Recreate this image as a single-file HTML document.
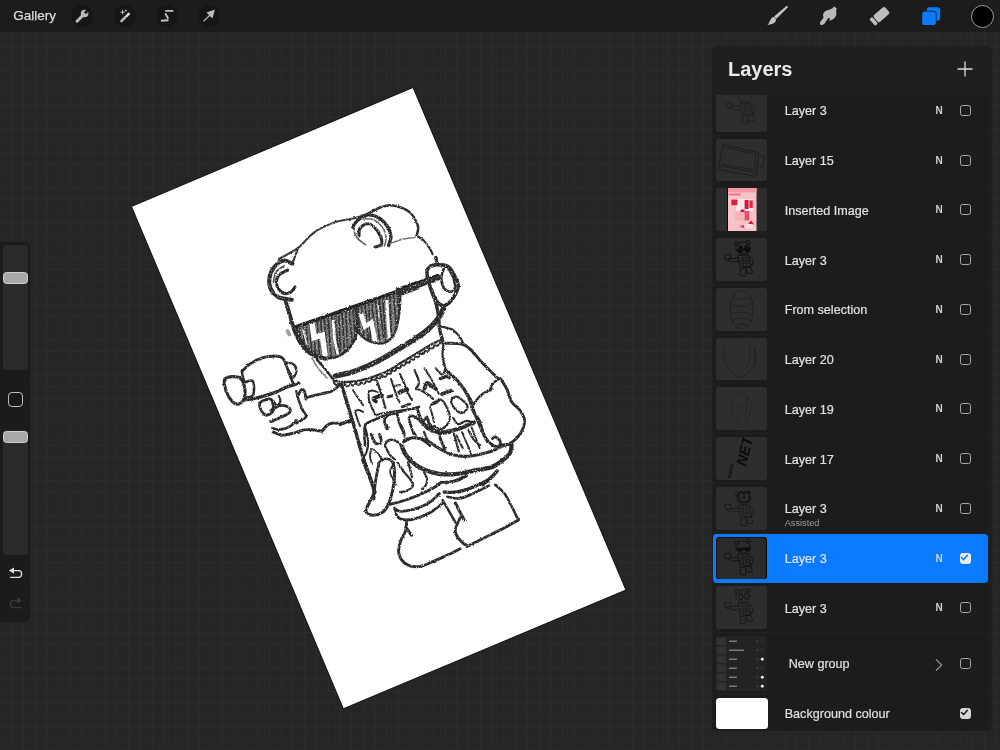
<!DOCTYPE html>
<html><head><meta charset="utf-8"><title>Procreate</title>
<style>
*{box-sizing:border-box;margin:0;padding:0}
html,body{width:1000px;height:750px;overflow:hidden;background:#252525;font-family:"Liberation Sans",sans-serif;}
#stage{will-change:transform;position:absolute;left:0;top:0;width:1000px;height:750px;overflow:hidden;background-color:#252525;
background-image:linear-gradient(to right,#2b2b2b 1px,transparent 1px),linear-gradient(to bottom,#2b2b2b 1px,transparent 1px);
background-size:11.72px 11.72px;background-position:-0.5px -0.5px;}
#art{position:absolute;left:0;top:0;width:1000px;height:750px}
#topbar{position:absolute;left:0;top:0;width:1000px;height:32px;background:#1c1c1c}
#gallery{position:absolute;left:13.3px;top:8px;font-size:13.5px;color:#dadada;-webkit-text-stroke:0.25px #dadada;line-height:16px;letter-spacing:0px}
.tb{position:absolute;top:5.2px;width:22px;height:22px;border-radius:11px;background:#161616}
.ti{position:absolute;top:0;left:0}
#side{position:absolute;left:0;top:242px;width:30px;height:380px;background:#1b1b1b;border-radius:0 5px 5px 0}
.trk{position:absolute;left:3px;width:25px;background:#2a2a2a;border-radius:3px}
.knob{position:absolute;left:2.8px;width:25.2px;height:12.6px;background:#a8a8a8;border:1px solid #cdcdcd;border-radius:3.5px}
#sq{position:absolute;left:8px;top:150.4px;width:15px;height:15px;border:1.8px solid #bdbdbd;border-radius:4px;background:#191919}
#panel{position:absolute;left:712px;top:46px;width:279.5px;height:685px;background:#1f1f1f;border-radius:6px;overflow:hidden}
#ptitle{position:absolute;left:17px;top:13px;font-size:19.5px;font-weight:bold;color:#ebebeb;line-height:22px}
.row{position:absolute;left:0.7px;width:275.6px;height:49.1px;background:#1c1c1c;border-radius:4px}
.row.sel{background:#0a7aff}
.th{position:absolute;left:3px;top:3px;width:51px;height:42.8px;background:#2e2e2e;border-radius:3px;overflow:hidden}
.nm{position:absolute;left:72px;top:17px;font-size:12.6px;line-height:15px;color:#e0e0e0;-webkit-text-stroke:0.2px #e0e0e0;white-space:nowrap}
.sub{position:absolute;left:72px;top:33px;font-size:9.2px;line-height:10px;color:#9a9a9a}
.bm{position:absolute;left:222.7px;top:19px;font-size:10px;font-weight:bold;line-height:11px;color:#d0d0d0}
.cb{position:absolute;left:247px;top:19.05px;width:11px;height:11px;border:1.3px solid #a8a8a8;border-radius:2.5px}
.cb.on{background:#ececec;border-color:#ececec}
</style></head><body>
<div id="stage">
<svg id="art" width="1000" height="750" viewBox="0 0 1000 750">
<defs><filter id="rg" x="-5%" y="-5%" width="110%" height="110%" color-interpolation-filters="sRGB"><feTurbulence type="fractalNoise" baseFrequency="0.45" numOctaves="2" seed="3" result="n"/><feDisplacementMap in="SourceGraphic" in2="n" scale="2.2" xChannelSelector="R" yChannelSelector="G" result="d"/><feTurbulence type="fractalNoise" baseFrequency="0.6" numOctaves="2" seed="11" result="n2"/><feColorMatrix in="n2" type="matrix" values="0 0 0 0 0  0 0 0 0 0  0 0 0 0 0  0 0 0 -3.0 2.72" result="m"/><feComposite in="d" in2="m" operator="in" result="c"/><feGaussianBlur in="c" stdDeviation="0.45"/></filter><clipPath id="lensL"><path d="M296.2 327.6 L355.4 306.8 C357 316 357.5 324 357 330.8 C356 338 353 345 347 350.5 C341 356 333 359 325 358 C314 356 301 345 296.2 327.6 Z"/></clipPath><clipPath id="lensR"><path d="M355.4 306.8 L400.2 290.8 C400.5 298 400.2 304 399.4 310 C399 316 398.4 321 397 326 C395.5 332 393.5 336 390.6 338.8 C387.5 342 384 343.6 379.4 343.6 C374 343.4 369 341.5 365 338.8 C360.5 335.5 357.5 332 355.4 327.6 Z"/></clipPath></defs>
<polygon points="413,87.5 625.9,590 343.4,708.7 131.5,206.5" fill="#fff" stroke="#050505" stroke-width="0.9"/>
<g filter="url(#rg)" fill="none" stroke="#2a2a2a" stroke-linecap="round" stroke-linejoin="round">
<g clip-path="url(#lensL)"><rect x="290" y="300" width="75" height="65" fill="#787878" stroke="none"/><path d="M296.0 330.0 l2.5 37.9" stroke="#303030" stroke-width="1.7"/><path d="M299.6 328.7 l3.5 37.4" stroke="#303030" stroke-width="1.7"/><path d="M303.1 327.3 l3.1 39.2" stroke="#303030" stroke-width="1.7"/><path d="M306.7 326.0 l1.7 40.0" stroke="#303030" stroke-width="1.7"/><path d="M310.2 324.7 l1.6 39.6" stroke="#303030" stroke-width="1.7"/><path d="M313.8 323.3 l1.7 37.5" stroke="#303030" stroke-width="1.7"/><path d="M317.3 322.0 l2.8 42.0" stroke="#303030" stroke-width="1.7"/><path d="M320.9 320.7 l1.9 38.3" stroke="#303030" stroke-width="1.7"/><path d="M324.4 319.3 l3.4 42.7" stroke="#303030" stroke-width="1.7"/><path d="M328.0 318.0 l3.2 39.4" stroke="#303030" stroke-width="1.7"/><path d="M331.6 316.7 l4.4 37.3" stroke="#303030" stroke-width="1.7"/><path d="M335.1 315.3 l4.1 38.7" stroke="#303030" stroke-width="1.7"/><path d="M338.7 314.0 l1.9 37.7" stroke="#303030" stroke-width="1.7"/><path d="M342.2 312.7 l2.4 41.9" stroke="#303030" stroke-width="1.7"/><path d="M345.8 311.3 l2.0 40.5" stroke="#303030" stroke-width="1.7"/><path d="M349.3 310.0 l3.4 39.2" stroke="#303030" stroke-width="1.7"/><path d="M352.9 308.7 l3.1 37.4" stroke="#303030" stroke-width="1.7"/><path d="M356.4 307.3 l1.7 38.2" stroke="#303030" stroke-width="1.7"/><path d="M360.0 306.0 l3.5 39.6" stroke="#303030" stroke-width="1.7"/><path d="M311.8 322 L314 337.6 L322.4 335.2 L325.2 356" stroke="#fff" stroke-width="5.4" stroke-linejoin="miter" stroke-linecap="butt"/><path d="M333 320 L334.6 340.4 L338 355" stroke="#fff" stroke-width="2.6" stroke-linecap="butt"/><path d="M303 330 L307 345" stroke="#e8e8e8" stroke-width="1.4"/></g>
<g clip-path="url(#lensR)"><rect x="350" y="285" width="60" height="65" fill="#787878" stroke="none"/><path d="M358.0 308.0 l2.4 40.5" stroke="#303030" stroke-width="1.7"/><path d="M361.5 306.6 l2.9 38.8" stroke="#303030" stroke-width="1.7"/><path d="M365.1 305.2 l3.9 41.2" stroke="#303030" stroke-width="1.7"/><path d="M368.6 303.8 l2.2 40.4" stroke="#303030" stroke-width="1.7"/><path d="M372.2 302.5 l3.1 42.3" stroke="#303030" stroke-width="1.7"/><path d="M375.7 301.1 l3.7 38.7" stroke="#303030" stroke-width="1.7"/><path d="M379.2 299.7 l4.4 37.7" stroke="#303030" stroke-width="1.7"/><path d="M382.8 298.3 l2.8 41.5" stroke="#303030" stroke-width="1.7"/><path d="M386.3 296.9 l2.0 39.9" stroke="#303030" stroke-width="1.7"/><path d="M389.8 295.5 l1.6 41.0" stroke="#303030" stroke-width="1.7"/><path d="M393.4 294.2 l3.8 40.4" stroke="#303030" stroke-width="1.7"/><path d="M396.9 292.8 l4.1 38.9" stroke="#303030" stroke-width="1.7"/><path d="M400.5 291.4 l3.6 40.6" stroke="#303030" stroke-width="1.7"/><path d="M404.0 290.0 l3.2 39.7" stroke="#303030" stroke-width="1.7"/><path d="M361 314 L365 326.5 L371.4 322.4 L375.5 343" stroke="#fff" stroke-width="4.6" stroke-linejoin="miter" stroke-linecap="butt"/><path d="M386.8 300 L388 322 L389.4 340" stroke="#fff" stroke-width="3.0" stroke-linecap="butt"/><path d="M378 304 L379 318" stroke="#e8e8e8" stroke-width="1.3"/></g>
<path d="M296.2 327.6 C301 345 314 356 325 358 C333 359 341 356 347 350.5 C353 345 356 338 357 330.8 C357.5 324 357 316 355.4 306.8" stroke-width="2.6"/>
<path d="M355.4 327.6 C357.5 332 360.5 335.5 365 338.8 C369 341.5 374 343.4 379.4 343.6 C384 343.6 387.5 342 390.6 338.8 C393.5 336 395.5 332 397 326 C399 318 400.5 302 400.2 290.8" stroke-width="2.4"/>
<path d="M296.2 326.8 L355 306.2 L400 290.4" stroke-width="3.6" stroke="#202020"/>
<path d="M397 292.6 L418 285" stroke-width="8.6" stroke="#303030" stroke-linecap="butt"/>
<path d="M416 285.4 L437.5 277.6" stroke-width="6.4" stroke="#2c2c2c"/>
<path d="M398 289 L438 274.8" stroke-width="1.6" stroke="#1a1a1a"/>
<path d="M279.0 259.0 C282.2 257.1 293.4 251.3 298.2 247.8 C303.0 244.3 304.6 241.1 307.8 238.2 C311.0 235.3 312.9 232.9 317.4 230.2 C321.9 227.5 328.9 224.2 335.0 222.2 C341.1 220.2 348.9 219.5 354.2 218.2 C359.5 216.9 364.9 214.9 367.0 214.2" stroke-width="2.1" opacity="0.95"/>
<path d="M367.0 214.2 C369.4 213.0 377.1 208.5 381.4 207.0 C385.7 205.5 388.9 205.1 392.6 205.4 C396.3 205.7 400.7 207.2 403.8 208.6 C406.9 209.9 409.0 211.4 411.0 213.5 C413.0 215.6 414.8 218.6 416.0 221.0 C417.2 223.4 418.1 225.5 418.2 228.0 C418.3 230.5 416.9 234.5 416.6 235.8" stroke-width="2.5"/>
<path d="M416.6 235.8 C417.7 236.5 420.9 237.8 423.0 239.8 C425.1 241.8 427.8 245.4 429.4 247.8 C431.0 250.2 432.1 253.1 432.6 254.2" stroke-width="2.2"/>
<path d="M391.0 243.2 C393.0 242.5 399.0 240.0 403.0 239.0 C407.0 238.0 413.0 237.7 415.0 237.4" stroke-width="1.4" opacity="0.70"/>
<path d="M435.8 257.5 L436.6 261.0" stroke-width="3.4"/>
<path d="M298.2 247.8 C297.8 249.0 296.4 252.5 295.5 255.0 C294.6 257.5 293.1 261.7 292.6 263.0" stroke-width="2.0"/>
<path d="M292.6 263.8 C291.1 263.3 286.9 260.1 283.8 260.6 C280.7 261.1 276.6 264.1 274.2 267.0 C271.8 269.9 269.9 274.5 269.4 278.2 C268.9 281.9 269.4 286.2 271.0 289.4 C272.6 292.6 275.5 295.7 279.0 297.4 C282.5 299.1 289.7 299.4 291.8 299.8" stroke-width="4.0"/>
<path d="M287.8 270.2 C286.3 271.0 280.9 272.6 279.0 275.0 C277.1 277.4 276.1 281.7 276.6 284.6 C277.1 287.5 279.9 291.3 282.2 292.6 C284.5 293.9 288.1 293.5 290.2 292.6 C292.3 291.7 294.2 287.9 295.0 287.0" stroke-width="3.1"/>
<path d="M284.0 266.0 C282.7 267.0 277.8 269.3 276.0 272.0 C274.2 274.7 273.9 280.3 273.5 282.0" stroke-width="1.9" opacity="0.80"/>
<path d="M285.0 298.8 C285.8 301.5 288.2 309.5 289.8 314.8 C291.4 320.1 292.7 326.0 294.6 330.8 C296.5 335.6 298.1 339.6 301.0 343.6 C303.9 347.6 308.2 352.3 312.2 354.8 C316.2 357.3 322.9 358.1 325.0 358.8" stroke-width="3.9"/>
<path d="M352.6 227.0 C353.4 225.9 355.0 222.6 357.4 220.6 C359.8 218.6 363.5 215.5 367.0 215.0 C370.5 214.5 374.7 215.4 378.2 217.4 C381.7 219.4 385.7 223.8 387.8 227.0 C389.9 230.2 390.9 233.5 391.0 236.6 C391.1 239.7 389.0 243.9 388.6 245.4" stroke-width="3.4"/>
<path d="M359.0 236.0 C359.1 234.8 358.5 230.6 359.8 228.6 C361.1 226.6 364.5 223.9 367.0 223.8 C369.5 223.7 372.7 225.7 375.0 227.8 C377.3 229.9 379.5 233.8 380.6 236.6 C381.7 239.4 382.3 242.9 381.4 244.6 C380.5 246.3 376.1 246.6 375.0 247.0" stroke-width="3.1"/>
<path d="M353.4 223.8 C353.5 225.0 353.3 228.6 354.0 231.0 C354.7 233.4 355.5 235.9 357.4 238.2 C359.3 240.5 364.1 243.5 365.4 244.6" stroke-width="1.7" opacity="0.80"/>
<path d="M363.0 219.0 C364.7 219.1 369.7 218.0 373.0 219.5 C376.3 221.0 380.8 224.9 383.0 228.0 C385.2 231.1 385.8 235.0 386.0 238.0 C386.2 241.0 384.8 244.7 384.5 246.0" stroke-width="1.6" opacity="0.70"/>
<path d="M429.4 267.0 C431.4 265.3 435.8 264.6 439.0 264.6 C442.2 264.6 445.9 265.0 448.6 267.0 C451.3 269.0 453.4 273.4 455.0 276.6 C456.6 279.8 458.5 282.7 458.2 286.2 C457.9 289.7 455.5 294.2 453.4 297.4 C451.3 300.6 447.8 304.3 445.4 305.4 C443.0 306.5 440.9 305.1 439.0 303.8 C437.1 302.5 435.5 299.8 434.2 297.4 C432.9 295.0 432.2 293.1 431.0 289.4 C429.8 285.7 427.3 278.7 427.0 275.0 C426.7 271.3 427.4 268.7 429.4 267.0Z" stroke-width="3.6"/>
<path d="M443.8 268.6 C443.4 270.2 441.4 275.0 441.4 278.2 C441.4 281.4 442.3 285.5 443.8 287.8 C445.3 290.1 448.3 291.8 450.2 291.8 C452.1 291.8 454.5 290.1 455.0 287.8 C455.5 285.5 454.5 281.4 453.4 278.2 C452.3 275.0 449.4 270.2 448.6 268.6" stroke-width="2.6"/>
<path d="M434.2 297.4 C434.6 298.8 435.7 303.1 436.5 306.0 C437.3 308.9 438.6 313.5 439.0 315.0" stroke-width="2.5"/>
<path d="M431.4 289.6 C432.2 292.0 435.0 299.5 436.2 304.0 C437.4 308.5 438.1 312.8 438.6 316.8 C439.1 320.8 438.7 324.0 439.4 328.0 C440.1 332.0 442.1 338.7 442.6 340.8" stroke-width="3.4"/>
<path d="M335.4 376.0 C338.6 375.2 347.7 373.6 354.6 371.2 C361.5 368.8 370.1 365.1 377.0 361.6 C383.9 358.1 390.3 353.9 396.2 350.4 C402.1 346.9 407.4 343.9 412.2 340.8 C417.0 337.7 421.5 334.7 425.0 332.0 C428.5 329.3 430.6 327.0 433.0 324.5 C435.4 322.0 437.7 319.4 439.4 316.8 C441.1 314.2 442.7 310.1 443.4 308.8" stroke-width="5.4"/>
<path d="M317.0 359.6 C318.3 361.2 322.3 365.8 325.0 369.0 C327.7 372.2 331.7 377.2 333.0 378.8" stroke-width="2.6"/>
<path d="M312.0 358.0 C313.0 359.7 315.5 364.7 318.0 368.0 C320.5 371.3 325.5 376.3 327.0 378.0" stroke-width="1.6" opacity="0.60"/>
<path d="M287.5 331.0 L289.5 334.5" stroke-width="4.0" opacity="0.45"/>
<path d="M333.8 382.4 C334.0 382.7 334.5 383.5 334.8 383.9 C335.2 384.3 335.5 384.7 335.9 384.8 C336.3 385.0 336.7 384.9 337.1 384.8 C337.6 384.6 338.0 384.0 338.5 383.8 C338.9 383.7 339.3 383.5 339.7 383.7 C340.1 383.9 340.4 384.8 340.7 385.1 C341.1 385.4 341.5 385.6 341.9 385.6 C342.3 385.6 342.7 385.4 343.1 385.1 C343.6 384.8 344.1 384.0 344.5 383.9 C344.9 383.9 345.2 384.7 345.6 385.0 C345.9 385.4 346.2 385.9 346.7 386.1 C347.1 386.2 347.9 386.1 348.3 385.9 C348.8 385.7 349.0 385.1 349.4 384.8 C349.8 384.5 350.1 383.9 350.5 384.0 C350.9 384.0 351.4 384.9 351.9 385.1 C352.3 385.4 352.7 385.5 353.1 385.5 C353.5 385.5 353.9 385.3 354.3 384.9 C354.6 384.6 354.9 383.7 355.3 383.6 C355.7 383.4 356.1 383.7 356.6 383.9 C357.0 384.1 357.4 384.6 357.9 384.8 C358.3 384.9 358.7 384.9 359.1 384.8 C359.5 384.6 359.8 384.2 360.2 383.8 C360.5 383.4 360.8 382.5 361.2 382.5 C361.7 382.4 362.3 383.2 362.8 383.4 C363.3 383.6 363.8 383.7 364.2 383.6 C364.6 383.6 364.9 383.3 365.2 383.0 C365.5 382.6 365.7 381.8 366.0 381.5 C366.3 381.2 366.7 381.1 367.1 381.1 C367.6 381.2 368.2 381.7 368.6 381.8 C369.1 381.9 369.5 381.9 369.9 381.7 C370.2 381.6 370.5 381.2 370.8 380.7 C371.1 380.3 371.1 379.2 371.5 379.0 C371.9 378.9 372.5 379.6 373.0 379.8 C373.5 380.0 374.0 380.2 374.4 380.2 C374.8 380.2 375.2 380.0 375.5 379.7 C375.8 379.4 376.0 378.7 376.3 378.3 C376.6 378.0 376.9 377.5 377.3 377.5 C377.7 377.5 378.4 378.2 378.8 378.3 C379.3 378.4 379.7 378.5 380.1 378.3 C380.5 378.2 380.8 377.9 381.1 377.5 C381.4 377.0 381.5 376.1 381.8 375.9 C382.2 375.6 382.7 376.0 383.2 376.2 C383.6 376.3 384.1 376.7 384.6 376.7 C385.1 376.7 385.8 376.5 386.2 376.1 C386.5 375.8 386.6 375.2 386.7 374.7 C386.9 374.3 386.9 373.5 387.3 373.3 C387.7 373.2 388.5 373.8 389.0 373.8 C389.5 373.9 390.0 373.9 390.3 373.7 C390.7 373.6 391.0 373.2 391.2 372.8 C391.4 372.4 391.3 371.5 391.6 371.2 C391.9 370.8 392.3 370.8 392.7 370.8 C393.2 370.7 393.9 371.1 394.3 371.1 C394.8 371.0 395.2 370.9 395.5 370.6 C395.8 370.3 395.9 369.9 396.1 369.4 C396.3 368.8 396.1 367.8 396.4 367.6 C396.8 367.3 397.6 368.0 398.2 368.1 C398.7 368.2 399.2 368.3 399.6 368.2 C400.0 368.0 400.3 367.8 400.5 367.4 C400.7 367.0 400.7 366.2 401.0 365.8 C401.2 365.4 401.5 365.1 401.9 365.0 C402.3 364.9 403.1 365.4 403.5 365.4 C404.0 365.4 404.4 365.3 404.8 365.1 C405.1 364.9 405.3 364.4 405.5 364.0 C405.6 363.5 405.5 362.5 405.8 362.2 C406.1 361.9 406.8 362.3 407.3 362.4 C407.8 362.5 408.4 362.6 408.8 362.6 C409.2 362.5 409.6 362.2 409.8 361.9 C410.1 361.5 410.2 360.9 410.4 360.4 C410.6 360.0 410.6 359.4 411.0 359.2 C411.4 359.1 412.2 359.7 412.7 359.7 C413.2 359.8 413.7 359.8 414.0 359.6 C414.4 359.4 414.6 359.0 414.8 358.5 C415.0 358.1 414.9 357.2 415.2 356.9 C415.5 356.5 416.0 356.6 416.5 356.7 C416.9 356.7 417.6 357.0 418.0 356.9 C418.5 356.9 418.8 356.7 419.1 356.4 C419.4 356.1 419.5 355.6 419.7 355.1 C419.9 354.6 419.8 353.6 420.2 353.5 C420.5 353.3 421.4 353.9 421.9 354.0 C422.4 354.1 422.9 354.1 423.3 354.0 C423.6 353.8 423.9 353.5 424.1 353.1 C424.4 352.7 424.3 351.9 424.6 351.5 C424.8 351.1 425.2 350.9 425.6 350.9 C426.1 350.9 426.8 351.3 427.2 351.3 C427.7 351.3 428.1 351.2 428.4 350.9 C428.7 350.6 428.9 350.2 429.1 349.7 C429.2 349.2 429.1 348.1 429.4 347.9 C429.7 347.7 430.5 348.2 431.0 348.3 C431.6 348.4 432.1 348.5 432.5 348.4 C432.9 348.3 433.2 348.0 433.5 347.7 C433.7 347.3 433.7 346.6 433.9 346.2 C434.1 345.8 434.4 345.3 434.8 345.3 C435.2 345.2 435.9 345.8 436.4 345.8 C436.9 345.9 437.3 345.9 437.7 345.7 C438.0 345.5 438.3 345.1 438.5 344.7 C438.7 344.2 438.7 343.3 439.0 343.0 C439.3 342.7 439.9 343.0 440.4 343.1 C440.9 343.2 441.7 343.4 441.9 343.4" stroke-width="2.0"/>
<path d="M333.8 381.0 C336.0 381.2 342.5 382.1 347.0 382.0 C351.5 381.9 354.7 382.0 361.0 380.4 C367.3 378.8 378.3 375.3 385.0 372.4 C391.7 369.5 395.7 366.0 401.0 362.8 C406.3 359.6 411.7 356.4 417.0 353.2 C422.3 350.0 429.0 345.8 433.0 343.6 C437.0 341.4 439.7 340.6 441.0 340.0" stroke-width="2.3"/>
<path d="M441.0 326.4 C442.9 326.9 449.0 327.7 452.2 329.6 C455.4 331.5 458.3 335.2 460.2 337.6 C462.1 340.0 462.9 342.9 463.4 344.0" stroke-width="2.3"/>
<path d="M442.6 343.2 C445.8 343.3 457.0 342.8 461.8 344.0 C466.6 345.2 468.2 347.5 471.4 350.4 C474.6 353.3 477.8 358.1 481.0 361.6 C484.2 365.1 487.7 368.3 490.6 371.2 C493.5 374.1 497.3 377.9 498.6 379.2" stroke-width="2.9"/>
<path d="M443.4 344.0 C443.3 346.1 442.2 352.5 442.6 356.8 C443.0 361.1 445.3 367.5 445.8 369.6" stroke-width="2.3"/>
<path d="M449.0 372.8 C450.9 374.7 457.0 380.3 460.2 384.0 C463.4 387.7 466.1 391.9 468.2 395.2 C470.3 398.5 472.2 402.5 473.0 404.0" stroke-width="2.6"/>
<path d="M498.8 378.6 C497.7 379.5 493.9 382.3 492.4 384.2 C490.9 386.1 490.4 388.9 490.0 389.8" stroke-width="2.3"/>
<path d="M492.4 389.0 C490.8 389.8 485.5 391.9 482.8 393.8 C480.1 395.7 478.1 398.1 476.4 400.2 C474.7 402.3 473.1 405.5 472.4 406.6" stroke-width="2.5"/>
<path d="M500.4 378.6 C501.5 380.3 504.9 385.1 506.8 389.0 C508.7 392.9 509.5 398.3 511.6 401.8 C513.7 405.3 517.5 406.9 519.6 409.8 C521.7 412.7 523.9 416.2 524.4 419.4 C524.9 422.6 524.1 425.8 522.8 429.0 C521.5 432.2 518.8 436.1 516.4 438.6 C514.0 441.1 511.1 443.1 508.4 444.2 C505.7 445.3 501.7 444.9 500.4 445.0" stroke-width="2.9"/>
<path d="M472.4 406.6 C473.1 408.5 474.9 414.1 476.4 417.8 C477.9 421.5 479.6 425.5 481.2 429.0 C482.8 432.5 484.1 435.9 486.0 438.6 C487.9 441.3 490.5 443.7 492.4 445.0 C494.3 446.3 496.4 446.3 497.2 446.6" stroke-width="2.9"/>
<path d="M492.4 438.6 C492.9 438.3 494.3 436.5 495.6 437.0 C496.9 437.5 499.9 440.2 500.4 441.8 C500.9 443.4 499.1 445.8 498.8 446.6" stroke-width="2.8"/>
<path d="M242.0 371.2 C243.3 370.0 246.5 366.3 250.0 364.0 C253.5 361.7 258.5 358.9 262.8 357.6 C267.1 356.3 272.4 356.0 275.6 356.0 C278.8 356.0 280.4 356.5 282.0 357.6 C283.6 358.7 284.0 359.8 285.2 362.4 C286.4 365.0 287.7 369.6 289.0 373.0 C290.3 376.4 292.3 381.3 293.0 383.0" stroke-width="2.8"/>
<path d="M285.2 362.4 C286.5 362.7 291.3 362.7 293.2 364.0 C295.1 365.3 296.4 368.1 296.4 370.4 C296.4 372.7 294.5 377.6 293.2 377.6 C291.9 377.6 289.2 371.6 288.4 370.4" stroke-width="2.3"/>
<path d="M243.6 400.0 C246.0 399.6 252.9 398.8 258.0 397.6 C263.1 396.4 269.2 394.5 274.0 392.8 C278.8 391.1 282.7 388.8 286.8 387.2 C290.9 385.6 296.8 383.9 298.8 383.2" stroke-width="3.4"/>
<path d="M242.0 371.2 C242.1 372.1 242.4 375.1 242.8 376.8 C243.2 378.5 244.1 380.8 244.4 381.6" stroke-width="2.5"/>
<path d="M224.4 380.0 C225.1 377.3 228.1 377.1 230.8 376.8 C233.5 376.5 238.1 376.8 240.4 378.4 C242.7 380.0 243.7 383.2 244.4 386.4 C245.1 389.6 245.3 394.7 244.4 397.6 C243.5 400.5 240.8 403.3 238.8 404.0 C236.8 404.7 234.4 403.5 232.4 401.6 C230.4 399.7 228.1 396.4 226.8 392.8 C225.5 389.2 223.7 382.7 224.4 380.0Z" stroke-width="3.1"/>
<path d="M244.4 382.4 C245.7 382.1 250.8 379.9 252.4 380.8 C254.0 381.7 254.0 385.5 254.0 388.0 C254.0 390.5 253.9 394.4 252.4 396.0 C250.9 397.6 246.4 397.3 245.2 397.6" stroke-width="2.6"/>
<path d="M259.6 404.0 C259.9 402.4 260.9 401.6 262.8 400.8 C264.7 400.0 269.1 398.4 270.8 399.2 C272.5 400.0 272.9 403.5 273.2 405.6 C273.5 407.7 273.6 410.4 272.4 412.0 C271.2 413.6 267.9 415.5 266.0 415.2 C264.1 414.9 262.3 412.3 261.2 410.4 C260.1 408.5 259.3 405.6 259.6 404.0Z" stroke-width="2.8"/>
<path d="M273.2 400.8 C273.9 401.6 276.0 405.6 277.2 405.6 C278.4 405.6 280.1 402.4 280.4 400.8 C280.7 399.2 279.1 396.8 278.8 396.0" stroke-width="2.3"/>
<path d="M270.8 410.4 C272.4 409.6 277.5 406.1 280.4 405.6 C283.3 405.1 286.8 406.1 288.4 407.2 C290.0 408.3 291.1 410.4 290.0 412.0 C288.9 413.6 285.2 415.2 282.0 416.8 C278.8 418.4 272.7 420.8 270.8 421.6" stroke-width="2.8"/>
<path d="M272.4 428.0 C273.7 428.3 277.5 429.9 280.4 429.6 C283.3 429.3 287.3 428.0 290.0 426.4 C292.7 424.8 295.3 421.1 296.4 420.0" stroke-width="2.6"/>
<path d="M273.2 432.0 C274.7 432.5 278.4 435.1 282.0 435.2 C285.6 435.3 290.8 433.7 294.8 432.8 C298.8 431.9 301.5 429.9 306.0 429.6 C310.5 429.3 319.3 430.9 322.0 431.2" stroke-width="2.9"/>
<path d="M296.4 391.2 C296.8 392.8 297.7 397.6 298.8 400.8 C299.9 404.0 301.6 407.7 302.8 410.4 C304.0 413.1 307.1 414.7 306.0 416.8 C304.9 418.9 298.0 422.1 296.4 423.2" stroke-width="2.6"/>
<path d="M298.8 394.4 C299.2 393.6 300.3 390.1 301.2 389.6 C302.1 389.1 303.6 389.6 304.4 391.2 C305.2 392.8 305.7 397.9 306.0 399.2" stroke-width="2.8"/>
<path d="M306.0 397.6 C308.7 396.9 317.7 394.7 322.0 393.6 C326.3 392.5 328.4 392.8 331.6 391.2 C334.8 389.6 339.6 385.2 341.2 384.0" stroke-width="2.9"/>
<path d="M322.0 431.2 C322.8 430.2 325.4 426.8 327.0 425.5 C328.6 424.2 329.2 423.6 331.6 423.2 C334.0 422.8 338.0 423.5 341.2 423.2 C344.4 422.9 349.2 421.9 350.8 421.6" stroke-width="2.9"/>
<path d="M341.2 384.0 C342.0 386.5 344.4 394.0 346.0 399.2 C347.6 404.4 349.2 409.9 350.8 415.2 C352.4 420.5 354.0 425.6 355.6 431.2 C357.2 436.8 358.8 443.5 360.4 448.8 C362.0 454.1 363.4 458.3 365.0 463.0 C366.6 467.7 368.3 472.2 370.0 477.0 C371.7 481.8 374.2 489.5 375.0 492.0" stroke-width="3.4"/>
<path d="M445.2 369.8 C447.3 371.7 454.1 376.5 458.0 381.0 C461.9 385.5 465.9 391.9 468.4 397.0 C470.9 402.1 471.3 407.4 473.2 411.4 C475.1 415.4 478.0 417.5 479.6 421.0 C481.2 424.5 481.5 428.7 482.8 432.2 C484.1 435.7 486.8 440.2 487.6 441.8" stroke-width="2.9"/>
<path d="M419.6 419.4 C421.2 421.0 425.5 426.9 429.2 429.0 C432.9 431.1 437.2 432.2 442.0 432.2 C446.8 432.2 452.7 430.6 458.0 429.0 C463.3 427.4 471.3 423.7 474.0 422.6" stroke-width="4.0"/>
<path d="M365.2 424.2 C368.1 422.9 376.7 418.3 382.8 416.2 C388.9 414.1 395.9 413.0 402.0 411.4 C408.1 409.8 416.7 407.4 419.6 406.6" stroke-width="2.3"/>
<path d="M439.6 435.4 L444.4 449.8" stroke-width="2.2"/>
<path d="M454.0 433.8 L458.8 451.4" stroke-width="2.2"/>
<path d="M462.0 432.2 L471.6 454.6" stroke-width="1.9"/>
<path d="M471.6 427.4 L479.6 448.2" stroke-width="1.9"/>
<path d="M424.0 432.0 L430.0 446.0" stroke-width="2.2"/>
<path d="M403.6 441.8 C405.2 441.1 409.5 438.1 413.2 437.8 C416.9 437.5 421.7 438.5 426.0 440.2 C430.3 441.9 434.5 445.8 438.8 448.2 C443.1 450.6 446.8 453.3 451.6 454.6 C456.4 455.9 461.1 456.7 467.6 456.2 C474.1 455.7 484.5 453.3 490.8 451.4 C497.1 449.5 501.7 446.2 505.2 445.0 C508.7 443.8 510.5 444.3 511.6 444.2" stroke-width="3.1"/>
<path d="M402.0 446.6 C402.8 448.2 403.9 452.7 406.8 456.2 C409.7 459.7 414.3 464.5 419.6 467.4 C424.9 470.3 432.4 472.7 438.8 473.8 C445.2 474.9 452.1 474.3 458.0 473.8 C463.9 473.3 468.5 471.7 474.0 470.6 C479.5 469.5 486.1 469.0 490.8 467.4 C495.5 465.8 498.8 463.4 502.0 461.0 C505.2 458.6 508.4 455.7 510.0 453.0 C511.6 450.3 511.3 446.3 511.6 445.0" stroke-width="4.3"/>
<path d="M497.2 470.6 C496.1 471.9 493.2 476.2 490.8 478.6 C488.4 481.0 484.1 483.9 482.8 485.0" stroke-width="2.8"/>
<path d="M466.8 475.4 C465.0 476.2 459.5 478.7 456.0 480.0 C452.5 481.3 447.7 482.8 446.0 483.4" stroke-width="2.3"/>
<path d="M340.0 425.0 C341.0 424.5 344.2 422.8 346.0 422.0 C347.8 421.2 350.2 420.3 351.0 420.0" stroke-width="2.5"/>
<path d="M353.0 390.0 C353.8 391.3 356.2 395.4 358.0 398.0 C359.8 400.6 362.6 404.2 363.5 405.5" stroke-width="1.9"/>
<path d="M368.5 391.5 C368.6 392.9 368.4 397.2 369.0 400.0 C369.6 402.8 370.9 405.4 372.0 408.0 C373.1 410.6 374.9 414.2 375.5 415.5" stroke-width="2.0"/>
<path d="M368.5 391.5 C369.2 391.3 371.4 390.3 373.0 390.5 C374.6 390.7 377.2 392.2 378.0 392.5" stroke-width="1.9"/>
<path d="M377.0 381.0 C377.7 383.0 379.8 389.3 381.0 393.0 C382.2 396.7 383.2 400.5 384.0 403.0 C384.8 405.5 385.2 407.2 385.5 408.0" stroke-width="2.2"/>
<path d="M373.5 398.5 C374.2 398.2 376.6 397.1 378.0 396.6 C379.4 396.1 381.3 395.7 382.0 395.5" stroke-width="4.0"/>
<path d="M374.0 400.0 L376.0 401.5" stroke-width="3.7"/>
<path d="M388.0 396.8 L391.5 396.0" stroke-width="3.1"/>
<path d="M391.0 379.0 C391.5 380.5 392.9 384.8 394.0 388.0 C395.1 391.2 396.5 395.6 397.5 398.0 C398.5 400.4 399.6 401.8 400.0 402.5" stroke-width="2.0"/>
<path d="M399.5 392.5 C400.1 392.2 401.8 391.3 403.0 390.8 C404.2 390.3 406.3 389.7 407.0 389.5" stroke-width="4.3"/>
<path d="M400.0 374.0 C400.7 375.5 402.5 379.5 404.0 383.0 C405.5 386.5 407.7 392.2 409.0 395.0 C410.3 397.8 411.5 399.2 412.0 400.0" stroke-width="2.0"/>
<path d="M394.0 386.0 L400.0 385.0" stroke-width="1.9"/>
<path d="M414.5 370.0 C415.2 372.0 418.8 378.8 419.0 382.0 C419.2 385.2 416.5 387.8 416.0 389.0" stroke-width="2.2"/>
<path d="M416.0 388.5 C417.2 389.0 420.7 390.2 423.0 391.5 C425.3 392.8 428.3 394.8 430.0 396.0 C431.7 397.2 432.5 398.5 433.0 399.0" stroke-width="2.3"/>
<path d="M424.5 388.5 C424.9 387.6 425.9 383.5 427.0 383.0 C428.1 382.5 429.5 384.5 431.0 385.5 C432.5 386.5 435.2 388.4 436.0 389.0" stroke-width="4.0"/>
<path d="M402.0 407.0 L410.0 404.0" stroke-width="2.5"/>
<path d="M376.0 415.0 C378.3 414.5 385.3 412.8 390.0 412.0 C394.7 411.2 399.3 410.7 404.0 410.0 C408.7 409.3 415.7 408.3 418.0 408.0" stroke-width="2.2"/>
<path d="M365.0 445.0 C364.9 442.5 364.3 433.5 364.5 430.0 C364.7 426.5 364.4 425.7 366.0 424.0 C367.6 422.3 371.3 421.2 374.0 420.0 C376.7 418.8 380.7 417.5 382.0 417.0" stroke-width="2.6"/>
<path d="M355.0 411.0 C355.7 410.8 357.7 409.8 359.0 410.0 C360.3 410.2 362.3 411.7 363.0 412.0" stroke-width="2.0"/>
<path d="M355.0 411.0 C355.3 412.2 356.2 415.5 357.0 418.0 C357.8 420.5 359.5 424.7 360.0 426.0" stroke-width="2.0"/>
<path d="M387.0 429.0 C386.6 427.8 384.7 424.0 384.5 422.0 C384.3 420.0 384.8 418.3 386.0 417.0 C387.2 415.7 390.2 414.5 392.0 414.0 C393.8 413.5 395.8 412.7 397.0 414.0 C398.2 415.3 397.8 418.7 399.0 422.0 C400.2 425.3 403.2 432.0 404.0 434.0" stroke-width="2.6"/>
<path d="M414.0 434.0 C413.5 432.7 411.8 428.7 411.0 426.0 C410.2 423.3 408.7 419.7 409.0 418.0 C409.3 416.3 411.3 415.7 413.0 416.0 C414.7 416.3 418.0 419.3 419.0 420.0" stroke-width="2.6"/>
<path d="M417.0 408.5 C417.5 409.9 419.0 414.9 420.0 417.0 C421.0 419.1 421.8 421.0 423.0 421.0 C424.2 421.0 426.0 416.7 427.0 417.0 C428.0 417.3 427.8 420.8 429.0 423.0 C430.2 425.2 432.2 428.2 434.0 430.0 C435.8 431.8 439.0 433.3 440.0 434.0" stroke-width="3.1"/>
<path d="M430.0 407.0 C430.3 408.2 431.3 411.5 432.0 414.0 C432.7 416.5 433.7 420.7 434.0 422.0" stroke-width="2.0"/>
<path d="M431.0 405.0 C431.8 404.7 434.5 403.8 436.0 403.0 C437.5 402.2 439.3 400.5 440.0 400.0" stroke-width="2.2"/>
<path d="M371.0 434.0 C371.3 435.0 372.2 438.3 373.0 440.0 C373.8 441.7 375.5 443.3 376.0 444.0" stroke-width="2.2"/>
<path d="M379.0 434.0 L381.0 440.0" stroke-width="2.2"/>
<path d="M386.0 442.0 C387.0 441.7 390.0 440.0 392.0 440.0 C394.0 440.0 397.0 441.7 398.0 442.0" stroke-width="2.0"/>
<path d="M404.0 440.0 C405.0 439.7 407.3 438.2 410.0 438.0 C412.7 437.8 417.0 438.0 420.0 439.0 C423.0 440.0 426.7 443.2 428.0 444.0" stroke-width="2.3"/>
<path d="M440.4 378.6 C441.5 378.2 445.3 376.3 446.8 376.2 C448.3 376.1 448.8 377.5 449.2 377.8" stroke-width="3.4"/>
<path d="M442.0 394.1 L451.6 390.6" stroke-width="3.7"/>
<path d="M451.6 399.4 C452.4 397.8 455.3 395.8 458.0 397.0 C460.7 398.2 467.1 403.9 467.6 406.6 C468.1 409.3 463.6 413.0 461.2 413.0 C458.8 413.0 454.8 408.9 453.2 406.6 C451.6 404.3 450.8 401.0 451.6 399.4Z" stroke-width="2.3"/>
<path d="M432.4 403.4 C434.0 402.9 439.1 397.8 442.0 400.2 C444.9 402.6 450.0 413.0 450.0 417.8 C450.0 422.6 444.7 427.7 442.0 429.0 C439.3 430.3 435.3 426.3 434.0 425.8" stroke-width="2.2"/>
<path d="M435.6 368.2 C436.7 369.3 440.4 374.3 442.0 374.6 C443.6 374.9 444.7 370.6 445.2 369.8" stroke-width="2.0"/>
<path d="M453.2 417.8 C454.0 418.9 455.9 423.7 458.0 424.2 C460.1 424.7 463.3 421.3 466.0 421.0 C468.7 420.7 472.7 422.3 474.0 422.6" stroke-width="2.2"/>
<path d="M467.6 429.0 C468.7 430.9 471.9 437.5 474.0 440.2 C476.1 442.9 479.3 444.2 480.4 445.0" stroke-width="2.0"/>
<path d="M456.4 435.4 L462.8 448.2" stroke-width="2.0"/>
<path d="M424.4 368.2 C425.7 370.3 430.0 376.7 432.4 381.0 C434.8 385.3 437.7 391.7 438.8 393.8" stroke-width="1.9"/>
<path d="M365.0 427.0 C365.5 429.2 367.7 436.0 368.0 440.0 C368.3 444.0 367.8 448.0 367.0 451.0 C366.2 454.0 363.7 456.8 363.0 458.0" stroke-width="2.2"/>
<path d="M371.5 435.0 C372.1 436.2 373.8 440.5 375.0 442.0 C376.2 443.5 377.9 444.3 379.0 444.0 C380.1 443.7 381.3 441.5 381.5 440.0 C381.7 438.5 380.2 435.8 380.0 435.0" stroke-width="2.5"/>
<path d="M385.0 446.0 C385.8 447.5 388.3 452.8 390.0 455.0 C391.7 457.2 394.2 458.8 395.0 459.5" stroke-width="2.2"/>
<path d="M385.0 445.0 C385.5 444.2 386.5 441.3 388.0 440.5 C389.5 439.7 392.0 439.4 394.0 440.0 C396.0 440.6 398.7 442.5 400.0 444.0 C401.3 445.5 401.7 448.2 402.0 449.0" stroke-width="2.3"/>
<path d="M371.0 449.0 C370.8 450.3 369.8 454.5 370.0 457.0 C370.2 459.5 371.7 462.8 372.0 464.0" stroke-width="1.9"/>
<path d="M373.0 449.0 C374.0 450.0 377.5 453.2 379.0 455.0 C380.5 456.8 381.5 459.2 382.0 460.0" stroke-width="1.9"/>
<path d="M379.0 463.0 C379.5 462.4 380.5 460.2 382.0 459.5 C383.5 458.8 386.0 458.4 388.0 459.0 C390.0 459.6 393.0 462.3 394.0 463.0" stroke-width="2.5"/>
<path d="M394.0 464.0 C393.3 465.2 390.3 468.8 390.0 471.0 C389.7 473.2 391.0 474.7 392.0 477.0 C393.0 479.3 395.3 483.7 396.0 485.0" stroke-width="1.7"/>
<path d="M398.0 463.0 C399.0 464.5 402.0 469.3 404.0 472.0 C406.0 474.7 408.5 476.7 410.0 479.0 C411.5 481.3 413.7 484.0 413.0 486.0 C412.3 488.0 408.2 490.0 406.0 491.0 C403.8 492.0 401.0 491.8 400.0 492.0" stroke-width="2.2"/>
<path d="M408.0 462.0 C408.3 463.2 409.3 466.5 410.0 469.0 C410.7 471.5 411.7 475.7 412.0 477.0" stroke-width="2.3"/>
<path d="M424.0 472.0 C424.5 473.2 426.7 476.8 427.0 479.0 C427.3 481.2 426.8 483.3 426.0 485.0 C425.2 486.7 422.7 488.3 422.0 489.0" stroke-width="2.2"/>
<path d="M430.0 425.0 C430.8 426.0 433.0 429.7 435.0 431.0 C437.0 432.3 439.5 432.8 442.0 433.0 C444.5 433.2 448.7 432.2 450.0 432.0" stroke-width="3.4"/>
<path d="M440.0 438.0 C440.5 439.2 442.2 443.2 443.0 445.0 C443.8 446.8 444.7 448.3 445.0 449.0" stroke-width="2.9"/>
<path d="M411.0 425.0 C411.3 426.0 412.2 429.3 413.0 431.0 C413.8 432.7 415.5 434.3 416.0 435.0" stroke-width="2.0"/>
<path d="M401.0 425.0 C401.5 426.0 403.4 429.0 404.0 431.0 C404.6 433.0 404.4 436.0 404.5 437.0" stroke-width="2.0"/>
<path d="M387.0 425.0 L388.0 429.0" stroke-width="2.0"/>
<path d="M362.6 460.0 C363.7 462.7 367.1 470.7 369.0 476.0 C370.9 481.3 373.8 487.5 373.8 492.0 C373.8 496.5 370.3 500.0 369.0 503.2 C367.7 506.4 365.3 509.2 365.8 511.2 C366.3 513.2 369.5 514.9 372.2 515.2 C374.9 515.5 379.1 514.5 381.8 512.8 C384.5 511.1 386.3 508.8 388.2 504.8 C390.1 500.8 391.9 494.1 393.0 488.8 C394.1 483.5 394.6 477.1 394.6 472.8 C394.6 468.5 393.3 464.8 393.0 463.2" stroke-width="3.1"/>
<path d="M379.0 463.0 C378.7 464.7 377.7 469.3 377.0 473.0 C376.3 476.7 375.5 480.7 375.0 485.0 C374.5 489.3 374.2 496.7 374.0 499.0" stroke-width="2.8"/>
<path d="M388.2 504.8 C391.1 504.0 400.2 501.9 405.8 500.0 C411.4 498.1 417.0 495.7 421.8 493.6 C426.6 491.5 431.4 489.1 434.6 487.2 C437.8 485.3 439.9 483.2 441.0 482.4" stroke-width="2.9"/>
<path d="M394.6 508.0 C395.4 508.5 396.5 510.9 399.4 511.2 C402.3 511.5 407.4 510.9 412.2 509.6 C417.0 508.3 423.7 505.9 428.2 503.2 C432.7 500.5 437.5 495.2 439.4 493.6" stroke-width="2.8"/>
<path d="M396.2 514.4 C397.0 515.2 398.1 518.4 401.0 519.2 C403.9 520.0 409.0 520.3 413.8 519.2 C418.6 518.1 425.0 515.5 429.8 512.8 C434.6 510.1 440.5 504.8 442.6 503.2" stroke-width="2.8"/>
<path d="M394.6 508.0 L396.2 514.4" stroke-width="2.2"/>
<path d="M441.0 482.4 C443.7 482.1 452.7 481.9 457.0 480.8 C461.3 479.7 465.0 476.8 466.6 476.0" stroke-width="2.6"/>
<path d="M444.2 492.0 C446.3 492.0 452.2 492.8 457.0 492.0 C461.8 491.2 467.7 489.3 473.0 487.2 C478.3 485.1 485.0 481.9 489.0 479.2 C493.0 476.5 495.7 472.5 497.0 471.2" stroke-width="3.4"/>
<path d="M447.4 496.8 C449.5 497.1 455.4 499.2 460.2 498.4 C465.0 497.6 471.4 494.1 476.2 492.0 C481.0 489.9 486.9 486.7 489.0 485.6" stroke-width="2.6"/>
<path d="M406.6 521.6 C406.5 523.1 406.7 527.3 405.8 530.4 C404.9 533.5 402.2 536.5 401.0 540.0 C399.8 543.5 398.6 548.0 398.6 551.2 C398.6 554.4 399.3 556.8 401.0 559.2 C402.7 561.6 405.8 564.4 409.0 565.6 C412.2 566.8 415.9 567.2 420.2 566.4 C424.5 565.6 429.8 562.8 434.6 560.8 C439.4 558.8 444.7 556.4 449.0 554.4 C453.3 552.4 458.3 549.7 460.2 548.8" stroke-width="2.9"/>
<path d="M405.8 527.2 L411.4 535.2" stroke-width="3.1"/>
<path d="M442.6 500.0 L455.4 522.4" stroke-width="2.5"/>
<path d="M455.4 503.2 L464.2 520.0" stroke-width="3.1"/>
<path d="M495.2 484.8 C496.7 486.1 501.5 489.6 504.0 492.8 C506.5 496.0 508.5 500.5 510.4 504.0 C512.3 507.5 513.9 510.9 515.2 513.6 C516.5 516.3 517.9 518.9 518.4 520.0" stroke-width="2.6"/>
<path d="M518.4 520.0 C516.0 521.3 509.1 525.3 504.0 528.0 C498.9 530.7 493.3 533.3 488.0 536.0 C482.7 538.7 475.5 542.4 472.0 544.0 C468.5 545.6 469.3 546.4 467.2 545.6 C465.1 544.8 461.2 541.6 459.2 539.2 C457.2 536.8 455.5 533.9 455.2 531.2 C454.9 528.5 456.7 525.6 457.6 523.2 C458.5 520.8 460.3 517.9 460.8 516.8" stroke-width="2.9"/>
</g></svg>
<div id="topbar">
<div id="gallery">Gallery</div>
<div class="tb" style="left:71.1px"><svg class="ti" width="22" height="22" viewBox="0 0 22 22"><path d="M6 16.2 L11.6 10.6" stroke="#b9b9b9" stroke-width="2.9" stroke-linecap="round" fill="none"/><circle cx="13.6" cy="8.5" r="3.8" fill="#b9b9b9"/><path d="M13.9 8.2 L18.6 3.5" stroke="#161616" stroke-width="2.9" fill="none"/></svg></div>
<div class="tb" style="left:113.6px"><svg class="ti" width="22" height="22" viewBox="0 0 22 22"><path d="M7.4 16.2 L11.6 12" stroke="#b4b4b4" stroke-width="2.5" stroke-linecap="round" fill="none"/><path d="M12.8 10.8 L14.8 8.8" stroke="#dcdcdc" stroke-width="2.5" stroke-linecap="round" fill="none"/><path d="M8.6 5 V9.4 M6.4 7.2 H10.8" stroke="#c0c0c0" stroke-width="1" fill="none"/><path d="M11.8 4.6 V6.6 M10.8 5.6 H12.8" stroke="#c0c0c0" stroke-width="0.9" fill="none"/></svg></div>
<div class="tb" style="left:155.8px"><svg class="ti" width="22" height="22" viewBox="0 0 22 22"><path d="M10 5.9 L16.6 5.9 M9.6 9 L11.9 12.9 M5.8 15.7 L11.7 15.3" stroke="#c4c4c4" stroke-width="1.9" stroke-linecap="round" fill="none"/></svg></div>
<div class="tb" style="left:198.3px"><svg class="ti" width="22" height="22" viewBox="0 0 22 22"><path d="M16.9 4.6 L8.4 7.6 L11.1 10.1 L5 15.9 L5.9 16.8 L11.9 10.9 L14.5 13.6 Z" fill="#bcbcbc"/></svg></div>
<svg style="position:absolute;left:762px;top:2px" width="30" height="28" viewBox="762 2 30 28"><path d="M788.2 6.9 L776.4 18.8 L774 16.6 L786.8 5.7 Z" fill="#c4c4c4"/><path d="M774.6 17.4 C776.8 18.8 776.2 21.8 773.6 23.2 C771.6 24.2 769.2 24.6 767.4 25 C769.2 23.4 769.6 21.6 770.6 19.6 C771.6 17.6 773.2 16.6 774.6 17.4 Z" fill="#c4c4c4"/></svg>
<svg style="position:absolute;left:814px;top:2px" width="30" height="28" viewBox="814 2 30 28"><path d="M820.4 24.6 C819.4 23.4 820 21.8 821.4 20.4 L823.6 17.4 C822.4 14.6 823.4 11.6 826.6 10.4 C828.6 9.6 831 9.4 832.4 8.2 L834.2 6.6 L836.8 8.6 L836 11 C837 13.2 836.4 15.8 834.6 17.8 C833 19.6 830.8 20.8 829 20.6 L830.2 18.4 L828.4 17.8 L824.6 23.6 C823.4 25 821.4 25.6 820.4 24.6 Z" fill="#b9b9b9"/></svg>
<svg style="position:absolute;left:866px;top:2px" width="30" height="28" viewBox="866 2 30 28"><g transform="rotate(-41 879.8 16)"><rect x="874.4" y="11.5" width="15.2" height="9" rx="2" fill="#bdbdbd"/><rect x="869.8" y="11.5" width="3.6" height="9" rx="1.3" fill="#bdbdbd"/></g></svg>
<svg style="position:absolute;left:918px;top:2px" width="28" height="28" viewBox="918 2 28 28"><rect x="926.8" y="7.2" width="13.4" height="13.4" rx="2.6" fill="#0a7aff"/><rect x="921.4" y="10.7" width="15.2" height="15.2" rx="3.2" fill="#1c1c1c"/><rect x="922.2" y="11.5" width="13.6" height="13.6" rx="2.6" fill="#0a7aff"/></svg>
<div style="position:absolute;left:971px;top:4.8px;width:23.2px;height:23.2px;border-radius:50%;background:#000;border:1.3px solid #9c9c9c"></div>

</div>
<div id="side">
<div class="trk" style="top:3px;height:125px"></div>
<div class="knob" style="top:29.5px"></div>
<div id="sq"></div>
<div class="trk" style="top:188px;height:125px"></div>
<div class="knob" style="top:188.6px"></div>
<svg style="position:absolute;left:7px;top:323px" width="18" height="16" viewBox="0 0 18 16"><path d="M6 5.6 H11.6 C15.6 5.6 15.6 12.4 11.6 12.4 H3.6" fill="none" stroke="#dedede" stroke-width="1.4" stroke-linecap="round"/><path d="M1.9 5.6 L7 2.4 L7 8.8 Z" fill="#dedede"/></svg>
<svg style="position:absolute;left:7px;top:353px" width="18" height="16" viewBox="0 0 18 16"><path d="M11 5.6 H6.4 C2.4 5.6 2.4 12.6 6.4 12.6 H14" fill="none" stroke="#3a3a3a" stroke-width="1.4" stroke-linecap="round"/><path d="M15 5.6 L10 2.4 L10 8.8 Z" fill="#3a3a3a"/></svg>

</div>
<div id="panel">


<div class="row" style="top:39.8px"><div class="th" style="top:3px"><svg width="51" height="43" viewBox="0 0 51 43" style="position:absolute;left:0;top:0"><g transform="translate(0.5 -1.5)" fill="none" stroke="#161616" stroke-width="0.8" opacity="0.7" stroke-linecap="round"><ellipse cx="28.5" cy="8.5" rx="7.2" ry="6.2"/><circle cx="22.3" cy="4" r="1.9"/><circle cx="33.6" cy="2.8" r="1.9"/><path d="M23.6 16 L34 15.2 L36.4 27.6 L26.4 29 Z"/><path d="M23.8 18.4 L16 19.6 M16.4 22.4 L24.6 22"/><path d="M10 15.6 L15.6 14.8 L16.4 18.6 L14.2 19 L14.6 21.2 L12.6 21.4 L12.2 19.2 L10.6 19.4 Z"/><path d="M34.4 16.4 C37.6 18 39 21 38.4 24.6 L35.8 25.4"/><path d="M27 25.6 C30 28.8 35 28 38 25.2"/><path d="M26.2 29.4 L25.4 35.6 L31 36.6 L31 30.4"/><path d="M32 29.6 L32.6 34.2 L38 33.4 L36.6 28"/><path d="M25.6 19 L33.8 18.2 M26 21.6 L34.4 20.8 M26.6 24.2 L35 23.4 M28 16 L29.4 28 M31.2 15.6 L32.6 27.6" stroke-width="0.5"/></g><path d="M22 33 L34 31.5" stroke="#161616" stroke-width="0.6" opacity=".6"/></svg></div><div class="nm" style="top:18.16px">Layer 3</div><div class="bm" style="top:19.16px">N</div><div class="cb"></div></div>
<div class="row" style="top:89.6px"><div class="th" style="top:3px"><svg width="51" height="43" viewBox="0 0 51 43" style="position:absolute;left:0;top:0"><g fill="none" stroke="#191919" stroke-width="0.9" opacity=".85"><path d="M7.6 5.4 L43 14 L40.4 33.6 L2.6 26.6 Z"/><path d="M10.6 8.6 L40 15.6 L38 31 L6 25"/><path d="M2.6 26.6 L2 30.4 L40 37.6 L40.4 33.6"/><path d="M43 16 L48.6 18.4 L47 28.4 L42 27"/></g></svg></div><div class="nm" style="top:18.40px">Layer 15</div><div class="bm" style="top:19.40px">N</div><div class="cb"></div></div>
<div class="row" style="top:139.4px"><div class="th" style="top:3px"><svg width="51" height="43" viewBox="0 0 51 43" style="position:absolute;left:0;top:0"><rect x="11" y="-0.5" width="30" height="44" fill="#0a0a0a"/><rect x="12" y="0" width="28.6" height="43" fill="#f7c3c8"/><rect x="12" y="0" width="28.6" height="4.4" fill="#f39aa6"/><rect x="12.6" y="5.6" width="12" height="1.8" fill="#ee6e83"/><rect x="20" y="11" width="17" height="12" fill="#fde8ea"/><rect x="15.4" y="11.6" width="6" height="5.6" fill="#d81e3f"/><rect x="28.6" y="12" width="4" height="9" fill="#d4173b"/><rect x="33.4" y="12.4" width="3.4" height="7.6" fill="#e0284a"/><rect x="24.6" y="21.6" width="4" height="3" fill="#cf1236"/><rect x="28.6" y="23" width="4.6" height="9.4" fill="#e2506a"/><rect x="19" y="24" width="9" height="8.6" fill="#f4b3bb"/><path d="M23 38 L31 36.6 L29 40.8 Z" fill="#e83a55"/><path d="M32 35.4 L35.4 32.4 L38 36.8 Z" fill="#e0102f"/><rect x="28" y="36" width="9" height="4.4" fill="#fbe3e5" opacity=".8"/></svg></div><div class="nm" style="top:18.64px">Inserted Image</div><div class="bm" style="top:18.64px">N</div><div class="cb"></div></div>
<div class="row" style="top:189.1px"><div class="th" style="top:3px"><svg width="51" height="43" viewBox="0 0 51 43" style="position:absolute;left:0;top:0"><g transform="translate(-1.5 1.5)" fill="none" stroke="#0e0e0e" stroke-width="0.9" opacity="0.95" stroke-linecap="round"><ellipse cx="28.5" cy="8.5" rx="7.2" ry="6.2"/><circle cx="22.3" cy="4" r="1.9"/><circle cx="33.6" cy="2.8" r="1.9"/><path d="M21.6 9.6 L36 8.4 L35.8 11.5 C35 13.4 32 13.6 30.6 11.8 L29 10.6 C28.6 13.4 25.6 14.4 23.4 12.6 Z" fill="#0e0e0e" stroke="none"/><path d="M23.6 16 L34 15.2 L36.4 27.6 L26.4 29 Z"/><path d="M23.8 18.4 L16 19.6 M16.4 22.4 L24.6 22"/><path d="M10 15.6 L15.6 14.8 L16.4 18.6 L14.2 19 L14.6 21.2 L12.6 21.4 L12.2 19.2 L10.6 19.4 Z"/><path d="M34.4 16.4 C37.6 18 39 21 38.4 24.6 L35.8 25.4"/><path d="M27 25.6 C30 28.8 35 28 38 25.2"/><path d="M26.2 29.4 L25.4 35.6 L31 36.6 L31 30.4"/><path d="M32 29.6 L32.6 34.2 L38 33.4 L36.6 28"/><path d="M25.6 19 L33.8 18.2 M26 21.6 L34.4 20.8 M26.6 24.2 L35 23.4 M28 16 L29.4 28 M31.2 15.6 L32.6 27.6" stroke-width="0.5"/><ellipse cx="26" cy="8.6" rx="1.7" ry="2.6" fill="#0e0e0e"/><ellipse cx="32" cy="8" rx="1.7" ry="2.6" fill="#0e0e0e"/></g></svg></div><div class="nm" style="top:18.88px">Layer 3</div><div class="bm" style="top:18.88px">N</div><div class="cb"></div></div>
<div class="row" style="top:238.9px"><div class="th" style="top:3px"><svg width="51" height="43" viewBox="0 0 51 43" style="position:absolute;left:0;top:0"><g fill="none" stroke="#1b1b1b" stroke-width="0.8" opacity=".8"><ellipse cx="25.6" cy="21.5" rx="11.6" ry="19.5"/><path d="M17 8.6 C22 12 30 12 34.4 8.4 M14.6 15.4 C20 19.6 31 19.6 36.6 15 M14.2 27 C20 23 31 23 37 27.4 M15.4 33 C21 29.4 30 29.4 36 33.4 M19 38 C23 35.6 28.6 35.6 32.6 38"/></g></svg></div><div class="nm" style="top:18.12px">From selection</div><div class="bm" style="top:19.12px">N</div><div class="cb"></div></div>
<div class="row" style="top:288.6px"><div class="th" style="top:3px"><svg width="51" height="43" viewBox="0 0 51 43" style="position:absolute;left:0;top:0"><g fill="none" stroke="#1d1d1d" stroke-width="0.8" opacity=".7"><path d="M9 8 C5 20 9 33 24 39.6 C36 36 41 24 38 9.6 M32.6 4.6 C36 14 34 26 27 33 M38 9.6 C40 16 40.6 24 38 30"/></g></svg></div><div class="nm" style="top:18.36px">Layer 20</div><div class="bm" style="top:19.36px">N</div><div class="cb"></div></div>
<div class="row" style="top:338.4px"><div class="th" style="top:3px"><svg width="51" height="43" viewBox="0 0 51 43" style="position:absolute;left:0;top:0"><g fill="none" stroke="#1d1d1d" stroke-width="0.8" opacity=".65"><path d="M25 6 C17 12 13.6 19 16.6 26 C19 32 22.6 37 26.6 41 C31 34 35.6 26 35 18 C34 12 30.6 8 25 6 Z M22 20 L28.6 19.6 M30 10 C31.6 16 31 24 29 30"/></g></svg></div><div class="nm" style="top:18.60px">Layer 19</div><div class="bm" style="top:18.60px">N</div><div class="cb"></div></div>
<div class="row" style="top:388.2px"><div class="th" style="top:3px"><svg width="51" height="43" viewBox="0 0 51 43" style="position:absolute;left:0;top:0"><g transform="rotate(-76 27 17)" font-family="Liberation Sans" font-weight="bold" font-style="italic" fill="#0b0b0b"><text x="15" y="23" font-size="15">NET</text></g><g transform="rotate(-80 15 33)" fill="#0d0d0d" font-family="Liberation Sans" font-size="4.6" font-weight="bold"><text x="7" y="34.5">REMIX</text></g></svg></div><div class="nm" style="top:18.84px">Layer 17</div><div class="bm" style="top:18.84px">N</div><div class="cb"></div></div>
<div class="row" style="top:437.9px"><div class="th" style="top:3px"><svg width="51" height="43" viewBox="0 0 51 43" style="position:absolute;left:0;top:0"><g transform="translate(-1 2.5)" fill="none" stroke="#121212" stroke-width="0.8" opacity="0.8" stroke-linecap="round"><ellipse cx="28.5" cy="8.5" rx="7.2" ry="6.2"/><circle cx="22.3" cy="4" r="1.9"/><circle cx="33.6" cy="2.8" r="1.9"/><path d="M23.6 16 L34 15.2 L36.4 27.6 L26.4 29 Z"/><path d="M23.8 18.4 L16 19.6 M16.4 22.4 L24.6 22"/><path d="M10 15.6 L15.6 14.8 L16.4 18.6 L14.2 19 L14.6 21.2 L12.6 21.4 L12.2 19.2 L10.6 19.4 Z"/><path d="M34.4 16.4 C37.6 18 39 21 38.4 24.6 L35.8 25.4"/><path d="M27 25.6 C30 28.8 35 28 38 25.2"/><path d="M26.2 29.4 L25.4 35.6 L31 36.6 L31 30.4"/><path d="M32 29.6 L32.6 34.2 L38 33.4 L36.6 28"/><path d="M25.6 19 L33.8 18.2 M26 21.6 L34.4 20.8 M26.6 24.2 L35 23.4 M28 16 L29.4 28 M31.2 15.6 L32.6 27.6" stroke-width="0.5"/></g><path d="M22.6 8.6 C22 4 27.6 3 28 8.4 L28.2 12.4 M28 8.4 C28 3.4 34 3.4 33.6 8.6 L33.2 13.2 M22.6 8.6 L23 13.6 C26 16 31 15.6 33.2 13.2" fill="none" stroke="#0d0d0d" stroke-width="1.3" opacity=".9"/></svg></div><div class="nm" style="top:18.08px">Layer 3</div><div class="sub" style="top:34.08px">Assisted</div><div class="bm" style="top:19.08px">N</div><div class="cb"></div></div>
<div class="row sel" style="top:487.7px"><div class="th" style="top:3px"><svg width="51" height="43" viewBox="0 0 51 43" style="position:absolute;left:0;top:0"><rect x="0.5" y="0.5" width="50" height="42" rx="3" fill="#2b2b2b" stroke="#120c08" stroke-width="1.2"/><g transform="translate(-1.5 1.5)" fill="none" stroke="#0f0f0f" stroke-width="0.85" opacity="0.9" stroke-linecap="round"><ellipse cx="28.5" cy="8.5" rx="7.2" ry="6.2"/><circle cx="22.3" cy="4" r="1.9"/><circle cx="33.6" cy="2.8" r="1.9"/><path d="M21.6 9.6 L36 8.4 L35.8 11.5 C35 13.4 32 13.6 30.6 11.8 L29 10.6 C28.6 13.4 25.6 14.4 23.4 12.6 Z" fill="#0f0f0f" stroke="none"/><path d="M23.6 16 L34 15.2 L36.4 27.6 L26.4 29 Z"/><path d="M23.8 18.4 L16 19.6 M16.4 22.4 L24.6 22"/><path d="M10 15.6 L15.6 14.8 L16.4 18.6 L14.2 19 L14.6 21.2 L12.6 21.4 L12.2 19.2 L10.6 19.4 Z"/><path d="M34.4 16.4 C37.6 18 39 21 38.4 24.6 L35.8 25.4"/><path d="M27 25.6 C30 28.8 35 28 38 25.2"/><path d="M26.2 29.4 L25.4 35.6 L31 36.6 L31 30.4"/><path d="M32 29.6 L32.6 34.2 L38 33.4 L36.6 28"/><path d="M25.6 19 L33.8 18.2 M26 21.6 L34.4 20.8 M26.6 24.2 L35 23.4 M28 16 L29.4 28 M31.2 15.6 L32.6 27.6" stroke-width="0.5"/></g></svg></div><div class="nm" style="top:18.32px">Layer 3</div><div class="bm" style="top:19.32px">N</div><div class="cb on"><svg width="11" height="11" viewBox="0 0 11 11" style="position:absolute;left:-1.3px;top:-1.3px"><path d="M2.6 5.6 L4.7 7.6 L8.4 3.3" fill="none" stroke="#0a7aff" stroke-width="1.5" stroke-linecap="round" stroke-linejoin="round"/></svg></div></div>
<div class="row" style="top:537.4px"><div class="th" style="top:3px"><svg width="51" height="43" viewBox="0 0 51 43" style="position:absolute;left:0;top:0"><g transform="translate(-1.5 1.5)" fill="none" stroke="#131313" stroke-width="0.85" opacity="0.85" stroke-linecap="round"><ellipse cx="28.5" cy="8.5" rx="7.2" ry="6.2"/><circle cx="22.3" cy="4" r="1.9"/><circle cx="33.6" cy="2.8" r="1.9"/><path d="M23.6 16 L34 15.2 L36.4 27.6 L26.4 29 Z"/><path d="M23.8 18.4 L16 19.6 M16.4 22.4 L24.6 22"/><path d="M10 15.6 L15.6 14.8 L16.4 18.6 L14.2 19 L14.6 21.2 L12.6 21.4 L12.2 19.2 L10.6 19.4 Z"/><path d="M34.4 16.4 C37.6 18 39 21 38.4 24.6 L35.8 25.4"/><path d="M27 25.6 C30 28.8 35 28 38 25.2"/><path d="M26.2 29.4 L25.4 35.6 L31 36.6 L31 30.4"/><path d="M32 29.6 L32.6 34.2 L38 33.4 L36.6 28"/><path d="M25.6 19 L33.8 18.2 M26 21.6 L34.4 20.8 M26.6 24.2 L35 23.4 M28 16 L29.4 28 M31.2 15.6 L32.6 27.6" stroke-width="0.5"/><path d="M24.6 9.6 C24 5 27.6 4.6 28 9 C28.4 13 25 13.6 24.6 9.6 Z M29.6 9 C29.6 4.6 33.4 4.4 33.4 8.6 C33.4 12.6 29.8 13 29.6 9 Z" stroke-width="1.1"/></g></svg></div><div class="nm" style="top:18.56px">Layer 3</div><div class="bm" style="top:18.56px">N</div><div class="cb"></div></div>
<div class="row" style="top:588.0px;height:58.5px"><div class="th" style="top:2px;height:54.7px;width:51.5px"><svg width="51.5" height="54.7" viewBox="0 0 51.5 54.7" style="position:absolute;left:0;top:0"><rect width="51.5" height="54.7" fill="#232323"/><rect x="0.6" y="1.4" width="9.4" height="7.6" fill="#323232"/><rect x="13" y="4.6" width="8" height="1.5" rx=".6" fill="#9a9a9a" opacity=".75"/><rect x="40.6" y="4.4" width="1.6" height="1.6" fill="#444"/><rect x="45" y="3.9" width="2.6" height="2.6" rx=".6" fill="none" stroke="#3c3c3c" stroke-width=".6"/><rect x="0.6" y="10.4" width="9.4" height="7.6" fill="#323232"/><rect x="13" y="13.6" width="15" height="1.5" rx=".6" fill="#9a9a9a" opacity=".75"/><rect x="40.6" y="13.4" width="1.6" height="1.6" fill="#444"/><rect x="45" y="12.9" width="2.6" height="2.6" rx=".6" fill="none" stroke="#3c3c3c" stroke-width=".6"/><rect x="0.6" y="19.4" width="9.4" height="7.6" fill="#323232"/><rect x="13" y="22.6" width="8" height="1.5" rx=".6" fill="#9a9a9a" opacity=".75"/><rect x="40.6" y="22.4" width="1.6" height="1.6" fill="#444"/><circle cx="46.3" cy="23.2" r="1.45" fill="#f2f2f2"/><rect x="0.6" y="28.4" width="9.4" height="7.6" fill="#323232"/><rect x="13" y="31.6" width="8" height="1.5" rx=".6" fill="#9a9a9a" opacity=".75"/><rect x="40.6" y="31.4" width="1.6" height="1.6" fill="#444"/><rect x="45" y="30.9" width="2.6" height="2.6" rx=".6" fill="none" stroke="#3c3c3c" stroke-width=".6"/><rect x="0.6" y="37.4" width="9.4" height="7.6" fill="#323232"/><rect x="13" y="40.6" width="8" height="1.5" rx=".6" fill="#9a9a9a" opacity=".75"/><rect x="40.6" y="40.4" width="1.6" height="1.6" fill="#444"/><circle cx="46.3" cy="41.2" r="1.45" fill="#f2f2f2"/><rect x="0.6" y="46.4" width="9.4" height="7.6" fill="#323232"/><rect x="13" y="49.6" width="8" height="1.5" rx=".6" fill="#9a9a9a" opacity=".75"/><rect x="40.6" y="49.4" width="1.6" height="1.6" fill="#444"/><circle cx="46.3" cy="50.2" r="1.45" fill="#f2f2f2"/></svg></div><div class="nm" style="left:76px;top:23px">New group</div><svg style="position:absolute;left:221.3px;top:22.5px" width="10" height="16" viewBox="0 0 10 16"><path d="M2.2 2.6 L7.6 8 L2.2 13.4" fill="none" stroke="#9a9a9a" stroke-width="1.1" stroke-linecap="round" stroke-linejoin="round"/></svg><div class="cb" style="top:24px"></div></div>
<div class="row" style="top:648.5px;height:38px"><div class="th" style="top:3px;height:31.5px;width:52px;background:#fff;border-radius:3.5px"></div><div class="nm" style="top:12px">Background colour</div><div class="cb on" style="top:13px;background:#d6d6d6;border-color:#d6d6d6"><svg width="11" height="11" viewBox="0 0 11 11" style="position:absolute;left:-1.3px;top:-1.3px"><path d="M2.6 5.6 L4.7 7.6 L8.4 3.3" fill="none" stroke="#1e1e1e" stroke-width="1.5" stroke-linecap="round" stroke-linejoin="round"/></svg></div></div>
<div id="hdr" style="position:absolute;left:0;top:0;width:280px;height:49px;background:#1f1f1f"></div>
<div id="ptitle2" style="position:absolute;left:16px;top:12px;font-size:20px;font-weight:bold;color:#ebebeb;line-height:22px">Layers</div>
<svg style="position:absolute;left:245px;top:15px" width="16" height="16" viewBox="0 0 16 16"><path d="M8 0.5 V15.5 M0.5 8 H15.5" stroke="#dcdcdc" stroke-width="1.3" fill="none"/></svg>
</div>
</div>
</body></html>
